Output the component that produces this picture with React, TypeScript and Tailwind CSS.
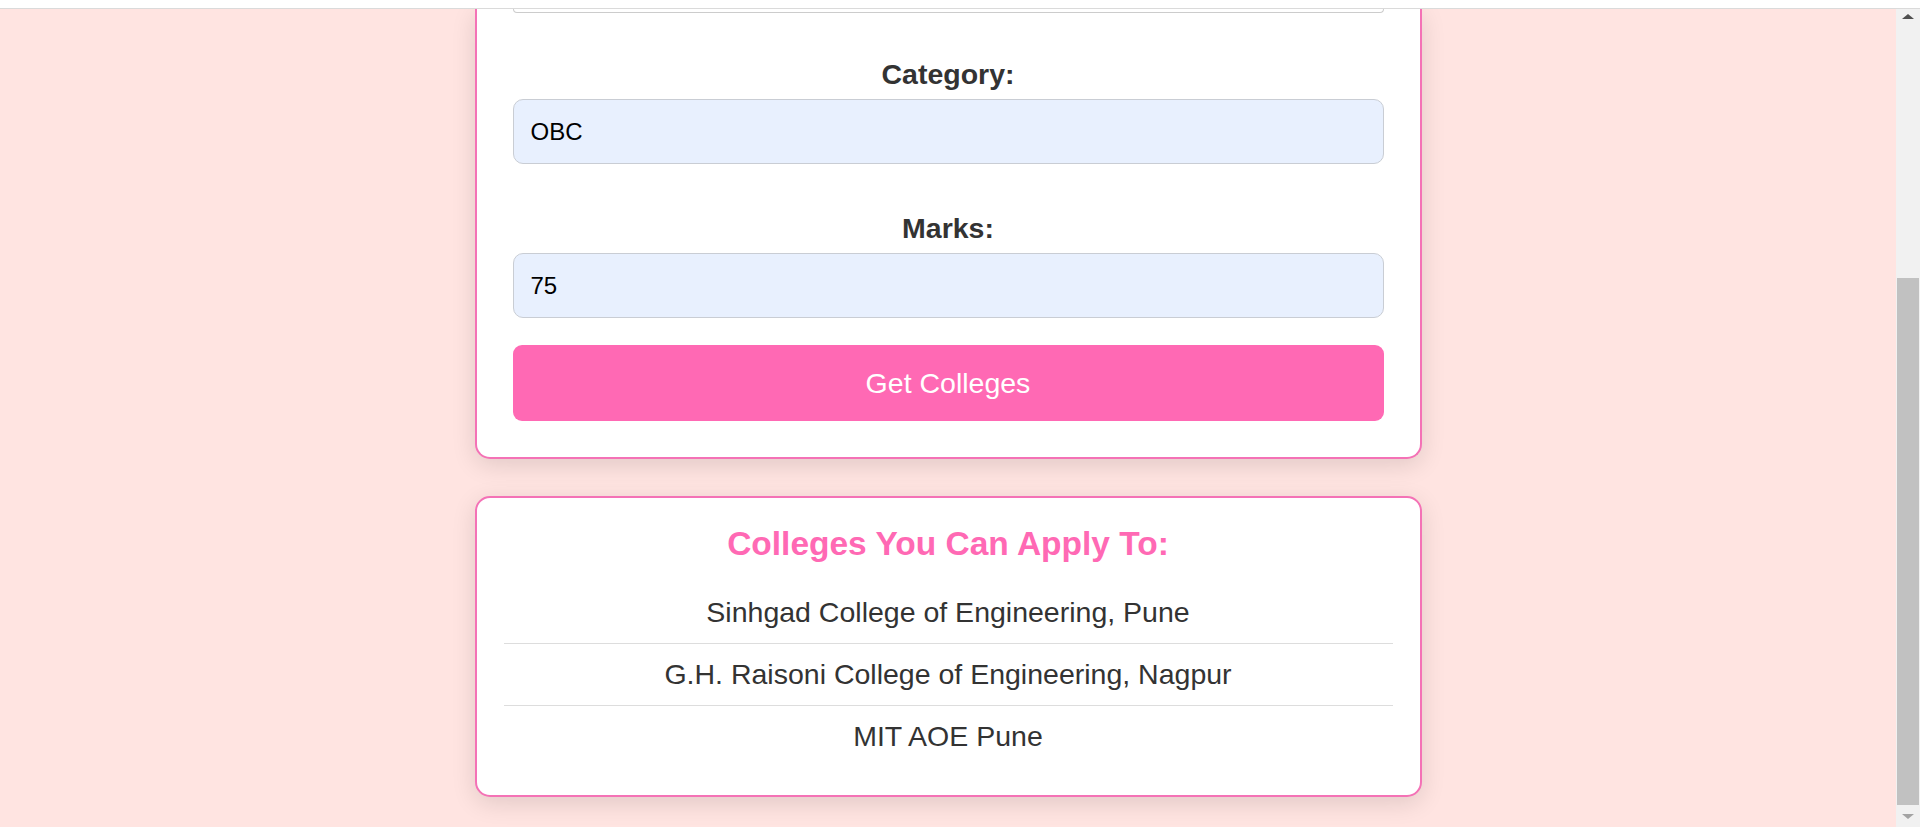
import React from "react";

const colleges = [
  "Sinhgad College of Engineering, Pune",
  "G.H. Raisoni College of Engineering, Nagpur",
  "MIT AOE Pune",
];

function Field({ label, value, top }: { label: string; value: string; top: string }) {
  return (
    <div className={top}>
      <label className="block text-center font-bold text-[28.5px] leading-[32px] text-[#333333] mb-[9px]">
        {label}
      </label>
      <input
        readOnly
        value={value}
        className="block h-[65px] w-full rounded-[10px] border border-[#c9cdd4] bg-[#e8f0fe] px-[17px] text-[24px] text-black outline-none font-['Liberation_Sans',Arial,sans-serif]"
      />
    </div>
  );
}

export default function App() {
  return (
    <div className="h-[827px] w-full overflow-hidden flex flex-col bg-[#ffe4e1] font-['Liberation_Sans',Arial,sans-serif]">
      <div className="relative z-10 h-[9px] shrink-0 bg-white border-b border-[#dadada]" />
      <div className="flex flex-1 min-h-0">
        <main className="flex-1 min-w-0 overflow-hidden flex flex-col items-center">
          <section className="w-[947px] bg-white border-2 border-t-0 border-[#f472b6] rounded-b-[15px] px-[36px] pb-[36px] shadow-[0_6px_24px_rgba(0,0,0,0.12)]">
            <div className="h-[4px] border border-t-0 border-[#cccccc] rounded-b-[10px] bg-white" />
            <Field label="Category:" value="OBC" top="mt-[45px]" />
            <Field label="Marks:" value="75" top="mt-[48px]" />
            <button className="mt-[27px] block h-[76px] w-full rounded-[9px] bg-[#ff69b4] text-white text-[28.5px] font-['Liberation_Sans',Arial,sans-serif]">
              Get Colleges
            </button>
          </section>

          <section className="mt-[37px] w-[947px] bg-white border-2 border-[#f472b6] rounded-[15px] px-[27px] pt-[27px] pb-[28px] shadow-[0_6px_24px_rgba(0,0,0,0.12)]">
            <h2 className="text-center font-bold text-[33.5px] leading-[38px] text-[#ff69b4] mb-[19px]">
              Colleges You Can Apply To:
            </h2>
            <ul>
              {colleges.map((c, i) => (
                <li
                  key={c}
                  className={
                    i < colleges.length - 1
                      ? "py-[14px] text-center text-[28.5px] leading-[33px] text-[#333333] border-b border-[#dddddd]"
                      : "py-[14px] text-center text-[28.5px] leading-[33px] text-[#333333]"
                  }
                >
                  {c}
                </li>
              ))}
            </ul>
          </section>
        </main>

        <div className="w-[24px] shrink-0 bg-[#f1f1f1] flex flex-col">
          <div className="h-[14px] flex items-center justify-center">
            <div className="w-0 h-0 border-x-[6px] border-x-transparent border-b-[5px] border-b-[#505050]" />
          </div>
          <div className="flex-1 flex flex-col justify-end">
            <div className="mx-[1px] h-[527px] bg-[#c1c1c1]" />
          </div>
          <div className="h-[22px] flex items-center justify-center">
            <div className="w-0 h-0 border-x-[6px] border-x-transparent border-t-[5px] border-t-[#a3a3a3]" />
          </div>
        </div>
      </div>
    </div>
  );
}
